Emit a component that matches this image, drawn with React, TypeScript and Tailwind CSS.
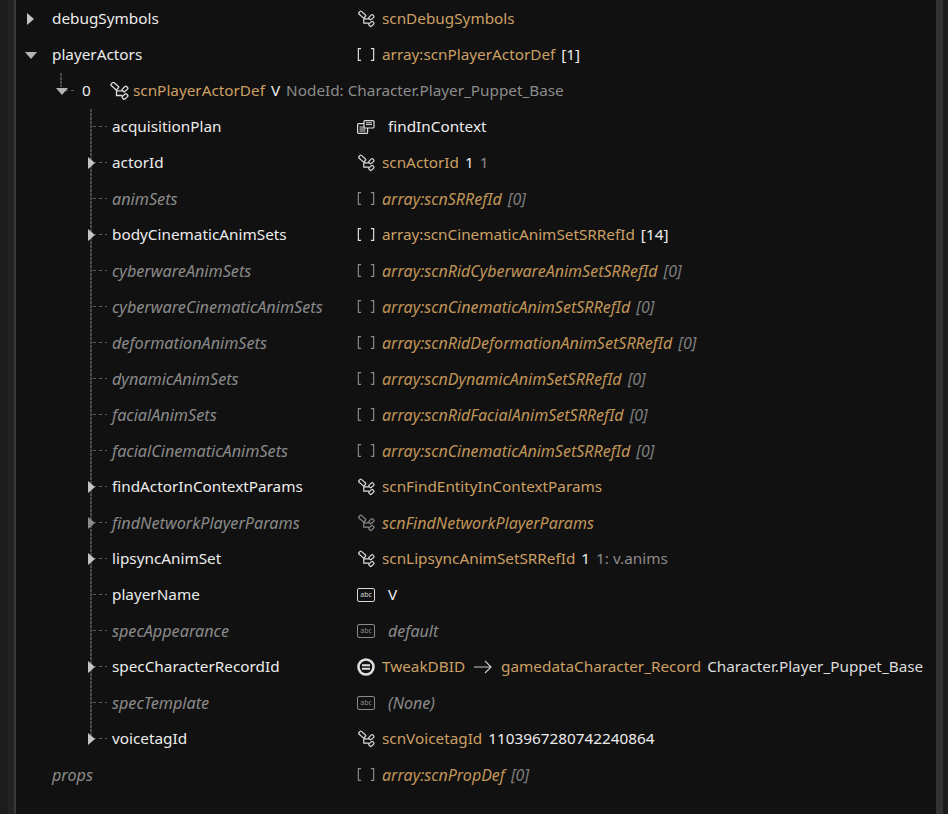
type Kind = "struct" | "array" | "abc" | "enumStr" | "tweak" | "none";

type Row = {
  name: string;
  dim?: boolean;
  caret?: boolean;
  kind: Kind;
  type?: string;
  value?: string;
  extra?: string;
};

const fields: Row[] = [
  { name: "acquisitionPlan", kind: "enumStr", value: "findInContext" },
  { name: "actorId", caret: true, kind: "struct", type: "scnActorId", value: "1", extra: "1" },
  { name: "animSets", dim: true, kind: "array", type: "array:scnSRRefId", extra: "[0]" },
  { name: "bodyCinematicAnimSets", caret: true, kind: "array", type: "array:scnCinematicAnimSetSRRefId", value: "[14]" },
  { name: "cyberwareAnimSets", dim: true, kind: "array", type: "array:scnRidCyberwareAnimSetSRRefId", extra: "[0]" },
  { name: "cyberwareCinematicAnimSets", dim: true, kind: "array", type: "array:scnCinematicAnimSetSRRefId", extra: "[0]" },
  { name: "deformationAnimSets", dim: true, kind: "array", type: "array:scnRidDeformationAnimSetSRRefId", extra: "[0]" },
  { name: "dynamicAnimSets", dim: true, kind: "array", type: "array:scnDynamicAnimSetSRRefId", extra: "[0]" },
  { name: "facialAnimSets", dim: true, kind: "array", type: "array:scnRidFacialAnimSetSRRefId", extra: "[0]" },
  { name: "facialCinematicAnimSets", dim: true, kind: "array", type: "array:scnCinematicAnimSetSRRefId", extra: "[0]" },
  { name: "findActorInContextParams", caret: true, kind: "struct", type: "scnFindEntityInContextParams" },
  { name: "findNetworkPlayerParams", dim: true, caret: true, kind: "struct", type: "scnFindNetworkPlayerParams" },
  { name: "lipsyncAnimSet", caret: true, kind: "struct", type: "scnLipsyncAnimSetSRRefId", value: "1", extra: "1: v.anims" },
  { name: "playerName", kind: "abc", value: "V" },
  { name: "specAppearance", dim: true, kind: "abc", value: "default" },
  { name: "specCharacterRecordId", caret: true, kind: "tweak" },
  { name: "specTemplate", dim: true, kind: "abc", value: "(None)" },
  { name: "voicetagId", caret: true, kind: "struct", type: "scnVoicetagId", value: "1103967280742240864" },
];

const hDash = "h-px bg-[repeating-linear-gradient(90deg,#5c5c5c_0_3px,transparent_3px_6px)]";
const vDash = "w-[2px] bg-[repeating-linear-gradient(180deg,#484848_0_3px,#222222_3px_4px)]";

function StructIcon({ dim }: { dim?: boolean }) {
  return (
    <svg width="20" height="18" viewBox="0 0 20 18" fill="none" stroke="currentColor" strokeWidth="1.3" className={dim ? "text-[#8a8a8a]" : "text-[#dcdcdc]"}>
      <rect x="1.8" y="2" width="8" height="4" rx="1" transform="rotate(42 5.8 4)" />
      <rect x="13.2" y="5.2" width="5.6" height="3.6" rx="1" transform="rotate(-42 16 7)" />
      <rect x="13.2" y="12.7" width="5.6" height="3.6" rx="1" transform="rotate(-42 16 14.5)" />
      <path d="M7.5 8v5.5h6M7.5 8.8h6" />
    </svg>
  );
}

function ArrayIcon({ dim }: { dim?: boolean }) {
  return (
    <svg width="20" height="15" viewBox="0 0 20 15" fill="none" stroke="currentColor" strokeWidth="1.3" className={dim ? "text-[#8a8a8a]" : "text-[#e0e0e0]"}>
      <path d="M4.5 1H1.5v13h3M15.5 1h3v13h-3" />
    </svg>
  );
}

function AbcIcon({ dim }: { dim?: boolean }) {
  return (
    <span className={`flex h-[14px] w-[18px] items-center justify-center rounded-[2px] border text-[7px] font-normal leading-none not-italic ${dim ? "border-[#8a8a8a] text-[#8a8a8a]" : "border-[#d8d8d8] text-[#d8d8d8]"}`}>
      abc
    </span>
  );
}

function EnumIcon() {
  return (
    <svg width="18" height="14" viewBox="0 0 18 14" fill="none" stroke="#dcdcdc" strokeWidth="1.2">
      <rect x="0.6" y="3.6" width="10" height="9.8" rx="1" fill="#111" />
      <path d="M2.5 7h6M2.5 9h6M2.5 11h6" strokeWidth="1" />
      <rect x="7" y="0.6" width="10" height="7.4" rx="1" fill="#111" />
      <path d="M9 2.8h6M9 4.6h6" strokeWidth="1" />
    </svg>
  );
}

function TweakIcon() {
  return (
    <svg width="18" height="18" viewBox="0 0 18 18" fill="none" stroke="#e0e0e0">
      <circle cx="9" cy="9" r="7.5" strokeWidth="2.6" />
      <path d="M5 7.2h8M5 10.8h8" strokeWidth="2" />
    </svg>
  );
}

function CaretRight({ dim }: { dim?: boolean }) {
  return (
    <svg width="7" height="12" viewBox="0 0 7 12" className={dim ? "fill-[#8a8a8a]" : "fill-[#c4c4c4]"}>
      <path d="M0 0l7 6-7 6z" />
    </svg>
  );
}

function CaretDown({ className = "" }: { className?: string }) {
  return (
    <svg width="12" height="7" viewBox="0 0 12 7" className={`fill-[#b4b4b4] ${className}`}>
      <path d="M0 0h12L6 7z" />
    </svg>
  );
}

function ValueCell({ row }: { row: Row }) {
  const dim = row.dim;
  if (row.kind === "tweak") {
    return (
      <div className="flex items-center">
        <TweakIcon />
        <span className="ml-[7px] text-[#cca065]">TweakDBID</span>
        <svg width="20" height="14" viewBox="0 0 20 14" fill="none" stroke="#c8c8c8" strokeWidth="1.2" className="ml-[8px]">
          <path d="M1 7h17M12 1l6 6-6 6" />
        </svg>
        <span className="ml-[8px] text-[#cca065]">gamedataCharacter_Record</span>
        <span className="ml-[6px] text-[#dcdcdc]">Character.Player_Puppet_Base</span>
      </div>
    );
  }
  const text = row.kind === "abc" || row.kind === "enumStr";
  return (
    <div className={`flex items-center ${dim ? "italic text-[16.05px]" : ""}`}>
      <span className="flex w-[18px] shrink-0 justify-center">
        {row.kind === "struct" && <StructIcon dim={dim} />}
        {row.kind === "array" && <ArrayIcon dim={dim} />}
        {row.kind === "abc" && <AbcIcon dim={dim} />}
        {row.kind === "enumStr" && <EnumIcon />}
      </span>
      {row.type && <span className={`ml-[7px] ${dim ? "text-[#c09558]" : "text-[#cca065]"}`}>{row.type}</span>}
      {row.value && (
        <span className={`${text ? "ml-[13px]" : "ml-[6px]"} ${dim ? "text-[#8a8a8a]" : "text-[#ececec]"}`}>{row.value}</span>
      )}
      {row.extra && <span className={`ml-[6px] ${dim ? "text-[#7d7d7d]" : "text-[#8c8c8c]"}`}>{row.extra}</span>}
    </div>
  );
}

function FieldRow({ row, last }: { row: Row; last: boolean }) {
  return (
    <div className="relative flex h-9 items-center">
      {/* tree guide */}
      <span className={`absolute left-[74px] top-0 ${vDash} ${last ? "h-[18px]" : "h-9"}`} />
      <span className={`absolute left-[77px] top-[17px] w-[14px] ${hDash}`} />
      {row.caret && (
        <span className="absolute left-[72px] top-[12px]">
          <CaretRight dim={row.dim} />
        </span>
      )}
      <span className={`ml-[96px] w-[245px] shrink-0 ${row.dim ? "italic text-[16.2px] text-[#8a8a8a]" : "text-[#ececec]"}`}>{row.name}</span>
      <ValueCell row={row} />
    </div>
  );
}

export default function App() {
  return (
    <div className="flex h-[814px] w-[948px] overflow-hidden bg-[#111111] text-[15.3px] font-['Noto_Sans','Open_Sans',sans-serif] leading-none">
      <div className="flex w-4 shrink-0">
        <div className="w-2 bg-[#1c1c1c]" />
        <div className="w-[6px] bg-[#222222]" />
        <div className="w-[2px] bg-[#383838]" />
      </div>
      <div className="flex-1 pt-px">
        <div className="flex h-9 items-center">
          <span className="ml-[11px] w-[25px]">
            <CaretRight />
          </span>
          <span className="w-[305px] text-[#ececec]">debugSymbols</span>
          <ValueCell row={{ name: "", kind: "struct", type: "scnDebugSymbols" }} />
        </div>
        <div className="flex h-9 items-center">
          <span className="ml-[9px] w-[27px]">
            <CaretDown />
          </span>
          <span className="w-[305px] text-[#ececec]">playerActors</span>
          <ValueCell row={{ name: "", kind: "array", type: "array:scnPlayerActorDef", value: "[1]" }} />
        </div>
        <div className="relative flex h-9 items-center">
          <span className={`absolute left-[44px] top-0 h-[14px] ${vDash}`} />
          <span className={`absolute left-[49px] top-[17px] w-[11px] ${hDash}`} />
          <CaretDown className="absolute left-[40px] top-[15px]" />
          <span className="ml-[66px] w-[27px] text-[#ececec]">0</span>
          <StructIcon />
          <span className="ml-[4px] text-[#cca065]">scnPlayerActorDef</span>
          <span className="ml-[6px] text-[#ececec]">V</span>
          <span className="ml-[6px] text-[#8c8c8c]">NodeId: Character.Player_Puppet_Base</span>
        </div>
        {fields.map((row, i) => (
          <FieldRow key={row.name} row={row} last={i === fields.length - 1} />
        ))}
        <div className="flex h-9 items-center">
          <span className="ml-9 w-[305px] italic text-[16.2px] text-[#8a8a8a]">props</span>
          <ValueCell row={{ name: "", dim: true, kind: "array", type: "array:scnPropDef", extra: "[0]" }} />
        </div>
      </div>
      <div className="w-[7px] shrink-0 bg-[#333333]" />
      <div className="w-[5px] shrink-0 bg-[#1c1c1c]" />
    </div>
  );
}
